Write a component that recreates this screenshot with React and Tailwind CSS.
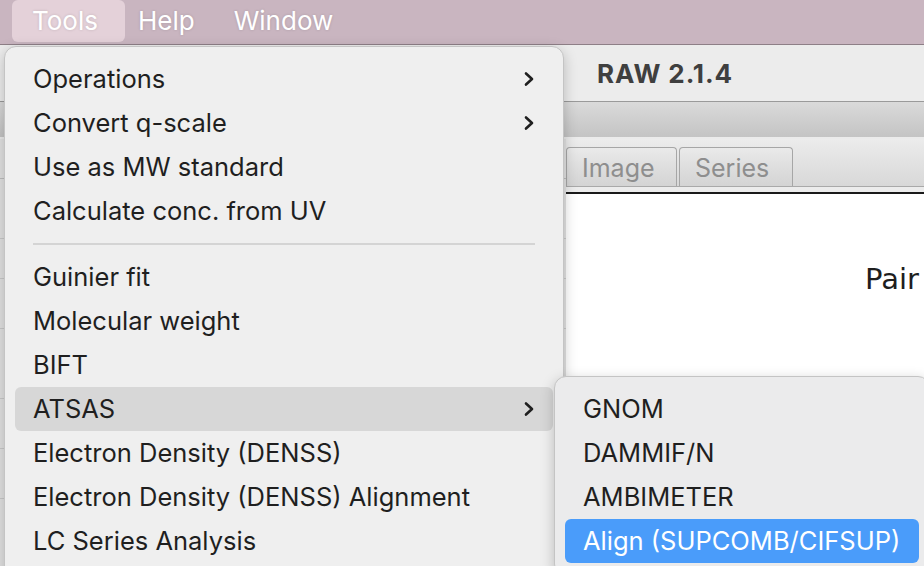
import React from "react";

function Chevron({ className = "" }) {
  return (
    <svg width="12" height="16" viewBox="0 0 12 16" className={className}>
      <path d="M3 2.5 L9 8 L3 13.5" fill="none" stroke="currentColor" strokeWidth="2.6" strokeLinecap="round" strokeLinejoin="round" />
    </svg>
  );
}

function Item({ label, sub, active }) {
  return (
    <div className={`h-[44px] mx-[10px] pl-[18px] pr-[18px] flex items-center justify-between rounded-[6px] ${active ? "bg-[#d7d7d7]" : ""}`}>
      <span>{label}</span>
      {sub && <Chevron className="text-[#1f1f1f]" />}
    </div>
  );
}

export default function App() {
  const font = { fontFamily: "Inter, 'Noto Sans', sans-serif" };
  return (
    <div className="relative w-[924px] h-[566px] overflow-hidden bg-white" style={font}>
      {/* menu bar */}
      <div className="h-[45px] bg-[#c9b5c0] flex items-center text-white text-[26px] border-b border-[#8e7f87] pb-[3px]">
        <div className="ml-[12px] h-[42px] mt-[1px] w-[113px] rounded-[6px] bg-[#e4d1d9] flex items-center pl-[20px] pb-[2px] [text-shadow:0_0_3px_rgba(0,0,0,0.15)]">Tools</div>
        <div className="ml-[13px] [text-shadow:0_0_3px_rgba(0,0,0,0.15)]">Help</div>
        <div className="ml-[39px] [text-shadow:0_0_3px_rgba(0,0,0,0.15)]">Window</div>
      </div>
      {/* background window */}
      <div className="h-[57px] bg-[#ececec] border-b border-[#9a9a9a] flex items-center pl-[597px]">
        <span className="font-bold text-[26px] text-[#3f3f3f] tracking-[0.9px]">RAW 2.1.4</span>
      </div>
      <div className="h-[37px] bg-gradient-to-b from-[#dadada] to-[#c4c4c4] border-b-2 border-[#ebebeb]"></div>
      <div className="flex h-[427px]">
        <div className="w-[566px] bg-[#e2e2e2] flex flex-col">
          <div className="h-[40px] border-b border-[#bdbdbd]"></div>
          <div className="h-[60px] border-b border-[#c9c9c9]"></div>
          <div className="h-[40px] border-b border-[#c9c9c9]"></div>
          <div className="h-[50px] border-b border-[#c9c9c9]"></div>
          <div className="h-[70px] border-b border-[#c9c9c9]"></div>
          <div className="h-[50px] border-b border-[#c9c9c9]"></div>
          <div className="h-[50px] border-b border-[#c9c9c9]"></div>
        </div>
        <div className="flex-1 flex flex-col">
          <div className="h-[48px] bg-gradient-to-b from-[#ececec] to-[#d8d8d8] flex items-end border-b border-[#a9a9a9]">
            <div className="w-[111px] h-[39px] rounded-t-[4px] border border-b-0 border-[#a6a6a6] bg-gradient-to-b from-[#eaeaea] via-[#dedede] to-[#d4d4d4] flex items-center pl-[15px] pt-[4px] text-[25px] text-[#8e8e8e]">Image</div>
            <div className="w-[114px] h-[39px] ml-[2px] rounded-t-[4px] border border-b-0 border-[#a6a6a6] bg-gradient-to-b from-[#eaeaea] via-[#dedede] to-[#d4d4d4] flex items-center pl-[15px] pt-[4px] text-[25px] text-[#8e8e8e]">Series</div>
          </div>
          <div className="h-[7px] bg-[#ececec] border-b-2 border-[#1a1a1a]"></div>
          <div className="flex-1 bg-white pt-[64px] pl-[299px] text-[29px] text-[#1e1e1e]" style={{ fontFamily: "'DejaVu Sans', sans-serif" }}>Pair</div>
        </div>
      </div>

      {/* main menu */}
      <div className="absolute left-[4px] top-[46px] w-[560px] h-[540px] rounded-[12px] bg-[#efefef] border border-[#c4c4c4] shadow-[0_4px_14px_rgba(0,0,0,0.22)] pt-[10px] text-[25.5px] text-[#1f1f1f]">
        <Item label="Operations" sub />
        <Item label="Convert q-scale" sub />
        <Item label="Use as MW standard" />
        <Item label="Calculate conc. from UV" />
        <div className="h-[22px] flex items-center px-[28px]">
          <div className="h-[2px] w-full bg-[#d4d4d4]"></div>
        </div>
        <Item label="Guinier fit" />
        <Item label="Molecular weight" />
        <Item label="BIFT" />
        <Item label="ATSAS" sub active />
        <Item label="Electron Density (DENSS)" />
        <Item label="Electron Density (DENSS) Alignment" />
        <Item label="LC Series Analysis" />
      </div>

      {/* submenu */}
      <div className="absolute left-[554px] top-[376px] w-[376px] h-[200px] rounded-[12px] bg-[#ebebec] border border-[#c4c4c4] shadow-[0_4px_14px_rgba(0,0,0,0.22)] pt-[10px] text-[25.5px] text-[#1f1f1f]">
        <div className="h-[44px] mx-[10px] pl-[18px] flex items-center">GNOM</div>
        <div className="h-[44px] mx-[10px] pl-[18px] flex items-center">DAMMIF/N</div>
        <div className="h-[44px] mx-[10px] pl-[18px] flex items-center">AMBIMETER</div>
        <div className="h-[44px] mx-[10px] pl-[18px] flex items-center rounded-[6px] bg-[#4a9cfa] text-white">Align (SUPCOMB/CIFSUP)</div>
      </div>
    </div>
  );
}
